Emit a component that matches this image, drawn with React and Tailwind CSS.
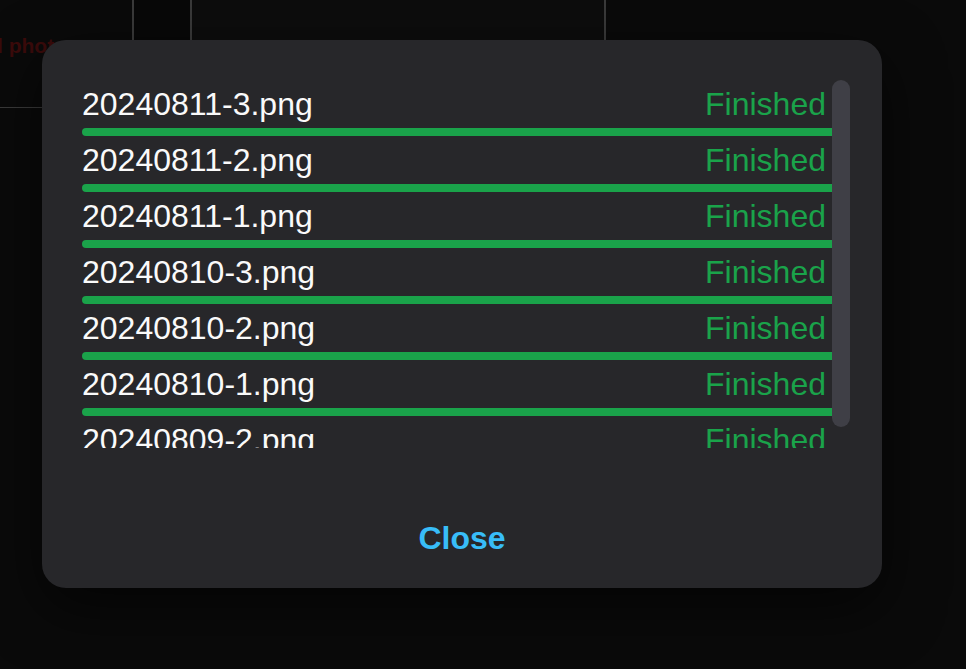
import React from 'react';

const files = [
  '20240811-3.png',
  '20240811-2.png',
  '20240811-1.png',
  '20240810-3.png',
  '20240810-2.png',
  '20240810-1.png',
  '20240809-2.png',
];

function UploadRow({ name }) {
  return (
    <div>
      <div className="flex justify-between items-center h-12 leading-[48px] text-[32px]">
        <span className="text-zinc-50">{name}</span>
        <span className="text-[#1aa34a] pr-1.5">Finished</span>
      </div>
      <div className="h-2 bg-[#1aa34a] rounded-l-full"></div>
    </div>
  );
}

function App() {
  return (
    <div
      className="relative w-full h-screen overflow-hidden bg-[#0a0a0a]"
      style={{ fontFamily: '"Liberation Sans", Arial, sans-serif' }}
    >
      {/* page behind the dialog */}
      <div className="flex h-[108px] border-b border-[#3a3a3a] w-[700px]">
        <div className="w-[134px] border-r-2 border-[#3a3a3a] pt-[30px] overflow-hidden">
          <span className="block -ml-[3px] text-[21px] font-bold text-[#3b0b0b] whitespace-nowrap">l photos</span>
        </div>
        <div className="w-[58px] border-r-2 border-[#3a3a3a] bg-[#080808]"></div>
        <div className="w-[414px] border-r-2 border-[#3a3a3a] bg-[#0d0d0d]"></div>
        <div className="flex-1 bg-[#0a0a0a]"></div>
      </div>

      {/* dialog */}
      <div className="absolute inset-0 pl-[42px] pt-10">
        <div className="w-[840px] h-[548px] bg-[#27272a] rounded-3xl shadow-[0_20px_60px_rgba(0,0,0,0.6)] pt-10 pl-10 pr-8 flex flex-col">
          <div className="relative h-[368px] overflow-hidden pr-[18px]">
            {files.map((f) => (
              <UploadRow key={f} name={f} />
            ))}
            {/* scrollbar thumb */}
            <div className="absolute right-0 top-0 w-[18px] h-[347px] rounded-full bg-[#3f3f46]"></div>
          </div>
          <div className="mt-[66px] flex justify-center pr-2">
            <button className="h-12 leading-[48px] text-[32px] font-bold text-[#38bdf8] px-4">
              Close
            </button>
          </div>
        </div>
      </div>
    </div>
  );
}

export default App;
